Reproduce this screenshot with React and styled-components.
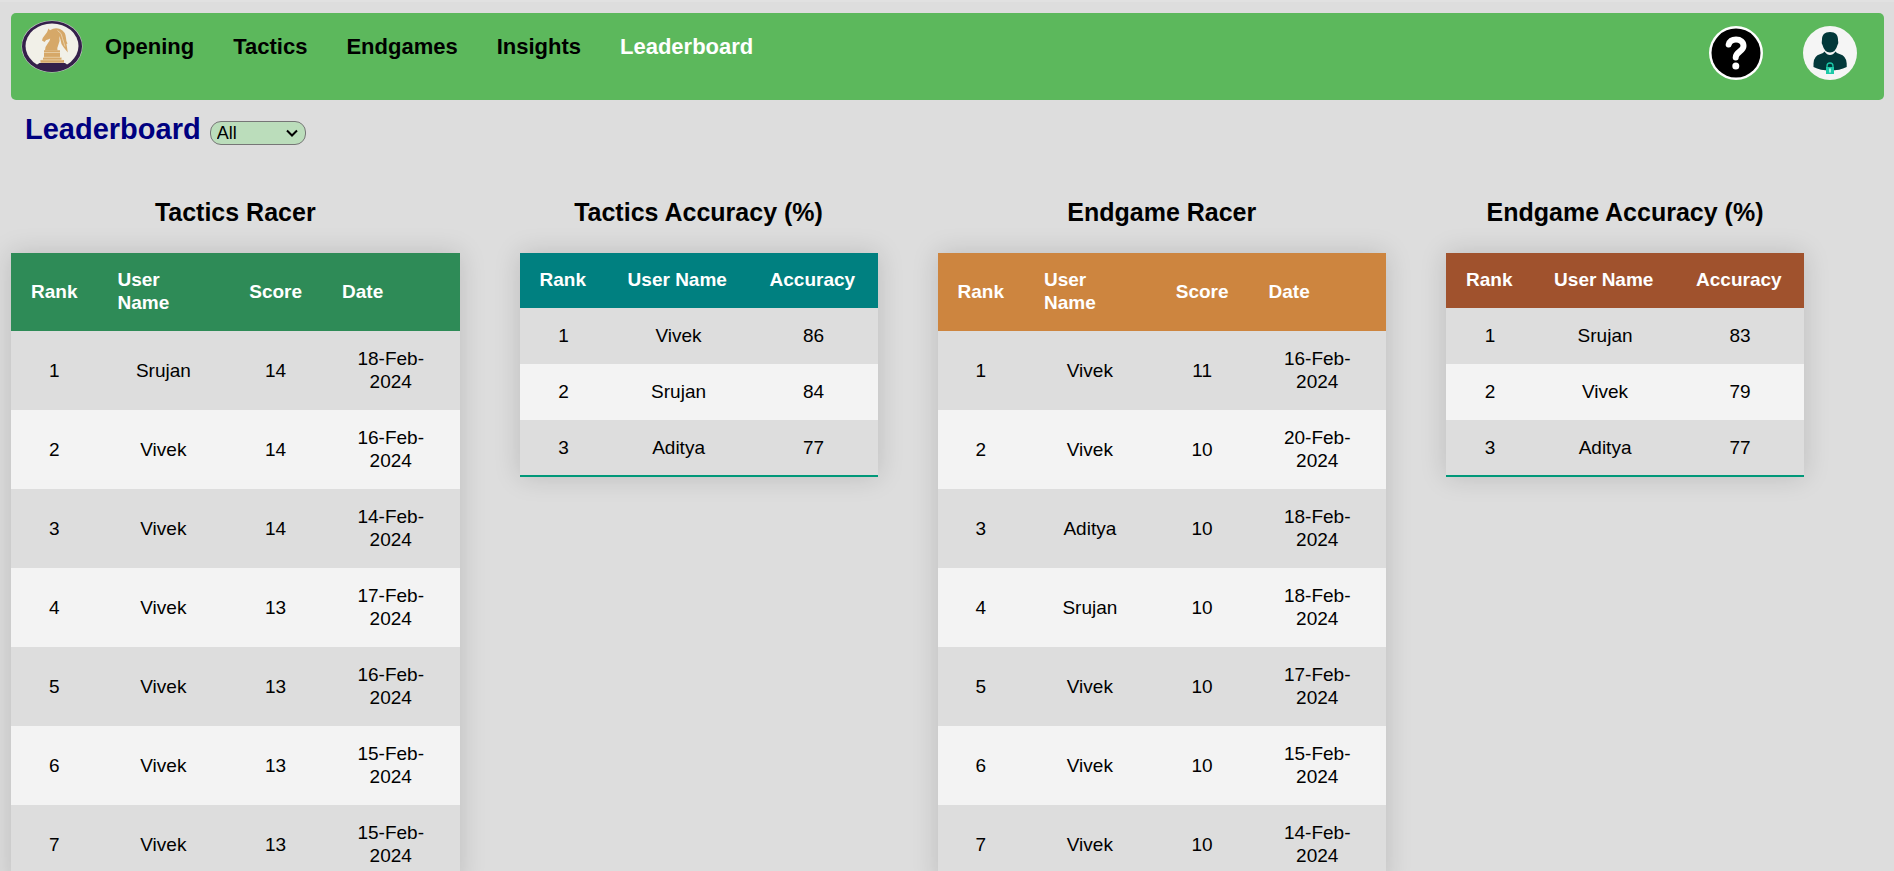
import React, { useState } from 'react';
import styled, { createGlobalStyle } from 'styled-components';

const tacticsRacer = [
  ['Srujan', 14, '18-Feb-2024'],
  ['Vivek', 14, '16-Feb-2024'],
  ['Vivek', 14, '14-Feb-2024'],
  ['Vivek', 13, '17-Feb-2024'],
  ['Vivek', 13, '16-Feb-2024'],
  ['Vivek', 13, '15-Feb-2024'],
  ['Vivek', 13, '15-Feb-2024'],
];

const endgameRacer = [
  ['Vivek', 11, '16-Feb-2024'],
  ['Vivek', 10, '20-Feb-2024'],
  ['Aditya', 10, '18-Feb-2024'],
  ['Srujan', 10, '18-Feb-2024'],
  ['Vivek', 10, '17-Feb-2024'],
  ['Vivek', 10, '15-Feb-2024'],
  ['Vivek', 10, '14-Feb-2024'],
];

const tacticsAccuracy = [
  ['Vivek', 86],
  ['Srujan', 84],
  ['Aditya', 77],
];

const endgameAccuracy = [
  ['Srujan', 83],
  ['Vivek', 79],
  ['Aditya', 77],
];

const racerColumns = ['Rank', 'User Name', 'Score', 'Date'];
const accuracyColumns = ['Rank', 'User Name', 'Accuracy'];
const links = ['Opening', 'Tactics', 'Endgames', 'Insights', 'Leaderboard'];

function Logo() {
  return (
    <svg width="62" height="53" viewBox="0 0 62 53" aria-hidden="true">
      <ellipse cx="31" cy="26.5" rx="30.5" ry="26" fill="#c9c6cb" />
      <ellipse cx="31" cy="26.5" rx="30" ry="25.5" fill="#34204a" />
      <ellipse cx="31" cy="26" rx="26.5" ry="22.5" fill="#f1f0e8" />
      <path d="M18.500 43h25.500l4 3q-7 5.500-17 5.500t-17-5.500z" fill="#34204a" />
      <path
        d="M27.500 8.500l1.500 1.700Q34 6.800 39 9q5.500 2.500 6 9 0 3 1.500 5.500l-1 .5 1.300 8.500-4-5q-3-3-3.300-8l-1.200-3.500q1 5-1 9-1.500 3-.8 5.500H24q0-4 3-7.500 2-2.500 2.200-4.500-2.200 1.200-4 1.500l-1.700 2-2.500-1.500q0-2.200 2-4.200l3-4z"
        fill="#d6a868"
      />
      <path d="M36.500 10.500q4.500 2 5 8l2.500 8" fill="none" stroke="#f1e2c6" strokeWidth=".7" />
      <path d="M23 30.300h16v7.200h1.500v2.500H43v2.700H19.500V40H22v-2.500h1z" fill="#d6a868" />
      <path d="M23 32.500h16M22 37.300h18M20 39.900h22" stroke="#f1e2c6" strokeWidth=".6" />
    </svg>
  );
}

function HelpIcon() {
  return (
    <svg width="54" height="54" viewBox="0 0 54 54" aria-hidden="true">
      <circle cx="27" cy="27" r="27" fill="#fff" />
      <circle cx="27" cy="27" r="24.500" fill="#000" />
      <path
        d="M19.700 18.500c1-3.500 3.700-5 7.300-5 4.500 0 7.500 2.500 7.500 6.500 0 5.500-7.800 5.500-7.800 11.500"
        fill="none"
        stroke="#fff"
        strokeWidth="6"
        strokeLinecap="round"
      />
      <circle cx="26.800" cy="40" r="3.500" fill="#fff" />
    </svg>
  );
}

function ProfileIcon() {
  return (
    <svg width="54" height="54" viewBox="0 0 54 54" aria-hidden="true">
      <circle cx="27" cy="27" r="27" fill="#f5f5f5" />
      <path
        d="M27 6c5.500 0 8 3 8 7.500q0 1.500.2 2 .5 1.500-.7 3.500Q32.500 26.500 27 26.500T19.500 19q-1.200-2-.7-3.500l.2-2C19 9 21.500 6 27 6z"
        fill="#02383a"
      />
      <path
        d="M21.500 25.500Q24 29 27 29t5.500-3.500q1 1.500 4 2.500 7 2 7.200 9.500v3.500q-7 3.500-16.700 3.500T10.500 41v-3.500Q10.500 30 17.500 28q3-1 4-2.500z"
        fill="#02383a"
      />
      <path d="M24 41v-1a3 3 0 0 1 6 0v1" fill="none" stroke="#1cc9a8" strokeWidth="1.300" />
      <rect x="23" y="41" width="8" height="7" fill="#1cc9a8" />
      <path d="M27 43v3" stroke="#c8fff2" strokeWidth="1.500" strokeLinecap="round" />
    </svg>
  );
}

function Board({ title, color, columns, rows, grow }) {
  return (
    <BoardSection $grow={grow}>
      <BoardTitle>{title}</BoardTitle>
      <Table>
        <thead>
          <HeadRow $color={color}>
            {columns.map((column) => (
              <HeadCell key={column}>{column}</HeadCell>
            ))}
          </HeadRow>
        </thead>
        <tbody>
          {rows.map((row, index) => (
            <BodyRow key={index}>
              <Cell>{index + 1}</Cell>
              {row.map((value, i) => (
                <Cell key={i}>{value}</Cell>
              ))}
            </BodyRow>
          ))}
        </tbody>
      </Table>
    </BoardSection>
  );
}

function App() {
  const [filter, setFilter] = useState('All');

  return (
    <>
      <GlobalStyle />
      <Header>
        <LogoLink href="#home" aria-label="Home">
          <Logo />
        </LogoLink>
        <Nav>
          {links.map((link) => (
            <NavLink key={link} href={`#${link.toLowerCase()}`} $active={link === 'Leaderboard'}>
              {link}
            </NavLink>
          ))}
        </Nav>
        <Actions>
          <IconButton type="button" aria-label="Help">
            <HelpIcon />
          </IconButton>
          <IconButton type="button" aria-label="Profile">
            <ProfileIcon />
          </IconButton>
        </Actions>
      </Header>
      <main>
        <Heading>
          <PageTitle>Leaderboard</PageTitle>
          <FilterBox>
            <Filter aria-label="Period" value={filter} onChange={(e) => setFilter(e.target.value)}>
              <option>All</option>
              <option>Today</option>
              <option>Week</option>
              <option>Month</option>
            </Filter>
            <Chevron width="12" height="8" viewBox="0 0 12 8" aria-hidden="true">
              <path d="M1 1.500l5 5 5-5" fill="none" stroke="#000" strokeWidth="2" />
            </Chevron>
          </FilterBox>
        </Heading>
        <Boards>
          <Board title="Tactics Racer" color="seagreen" columns={racerColumns} rows={tacticsRacer} grow />
          <Board title="Tactics Accuracy (%)" color="teal" columns={accuracyColumns} rows={tacticsAccuracy} />
          <Board title="Endgame Racer" color="peru" columns={racerColumns} rows={endgameRacer} grow />
          <Board title="Endgame Accuracy (%)" color="sienna" columns={accuracyColumns} rows={endgameAccuracy} />
        </Boards>
      </main>
    </>
  );
}

const GlobalStyle = createGlobalStyle`
  * {
    box-sizing: border-box;
  }
  body {
    margin: 0;
    padding: 11px 10px 0 11px;
    border-top: 2px solid #e1e1e1;
    background: #ddd;
    color: #000;
    font-family: Arial, 'Liberation Sans', sans-serif;
  }
`;

const Header = styled.header`
  display: flex;
  align-items: flex-start;
  height: 87px;
  padding: 7px 27px 0 10px;
  border-radius: 5px;
  background: #5cb85c;
`;

const LogoLink = styled.a`
  display: flex;
`;

const Nav = styled.nav`
  display: flex;
  gap: 39px;
  padding: 14px 0 0 22px;
`;

const NavLink = styled.a`
  color: ${(props) => (props.$active ? '#fff' : '#000')};
  font-size: 22px;
  line-height: 26px;
  font-weight: bold;
  text-decoration: none;
`;

const Actions = styled.div`
  display: flex;
  gap: 40px;
  margin-left: auto;
  padding-top: 6px;
`;

const IconButton = styled.button`
  display: flex;
  padding: 0;
  border: none;
  border-radius: 50%;
  background: none;
  cursor: pointer;
`;

const Heading = styled.div`
  display: flex;
  align-items: baseline;
  gap: 9px;
  padding: 12px 0 0 14px;
`;

const PageTitle = styled.h1`
  margin: 0;
  color: navy;
  font-size: 29px;
  line-height: 34px;
`;

/* the select and its arrow share one grid cell */
const FilterBox = styled.div`
  display: inline-grid;
  align-items: center;
`;

const Filter = styled.select`
  grid-area: 1 / 1;
  width: 96px;
  height: 24px;
  padding: 0 24px 0 6px;
  border: 1px solid #767676;
  border-radius: 11px;
  background-color: #bbddbb;
  color: #000;
  font-family: inherit;
  font-size: 18px;
  appearance: none;
`;

const Chevron = styled.svg`
  grid-area: 1 / 1;
  justify-self: end;
  margin-right: 8px;
  pointer-events: none;
`;

const Boards = styled.div`
  display: flex;
  align-items: flex-start;
  gap: 60px;
  padding: 52px 80px 30px 0;
`;

const BoardSection = styled.section`
  flex: ${(props) => (props.$grow ? '1 1 0' : 'none')};
`;

const BoardTitle = styled.h2`
  margin: 0 0 26px;
  font-size: 25px;
  line-height: 29px;
  text-align: center;
`;

const Table = styled.table`
  width: 100%;
  min-width: 358px;
  border-spacing: 0;
  font-size: 19px;
  line-height: 23px;
  box-shadow: 0 0 25px rgba(0, 0, 0, 0.15);
`;

const HeadRow = styled.tr`
  background: ${(props) => props.$color};
  color: #fff;
  text-align: left;
`;

const HeadCell = styled.th`
  padding: 15px 20px 17px;
`;

const Cell = styled.td`
  padding: 16px 20px;
  border-bottom: 1px solid #ddd;
  text-align: center;
`;

const BodyRow = styled.tr`
  background: #ddd;

  &:nth-of-type(even) {
    background: #f3f3f3;
  }

  &:nth-of-type(even) ${Cell} {
    border-color: #f3f3f3;
  }

  &:last-of-type ${Cell} {
    border-bottom: 2px solid #009879;
  }
`;

export default App;
